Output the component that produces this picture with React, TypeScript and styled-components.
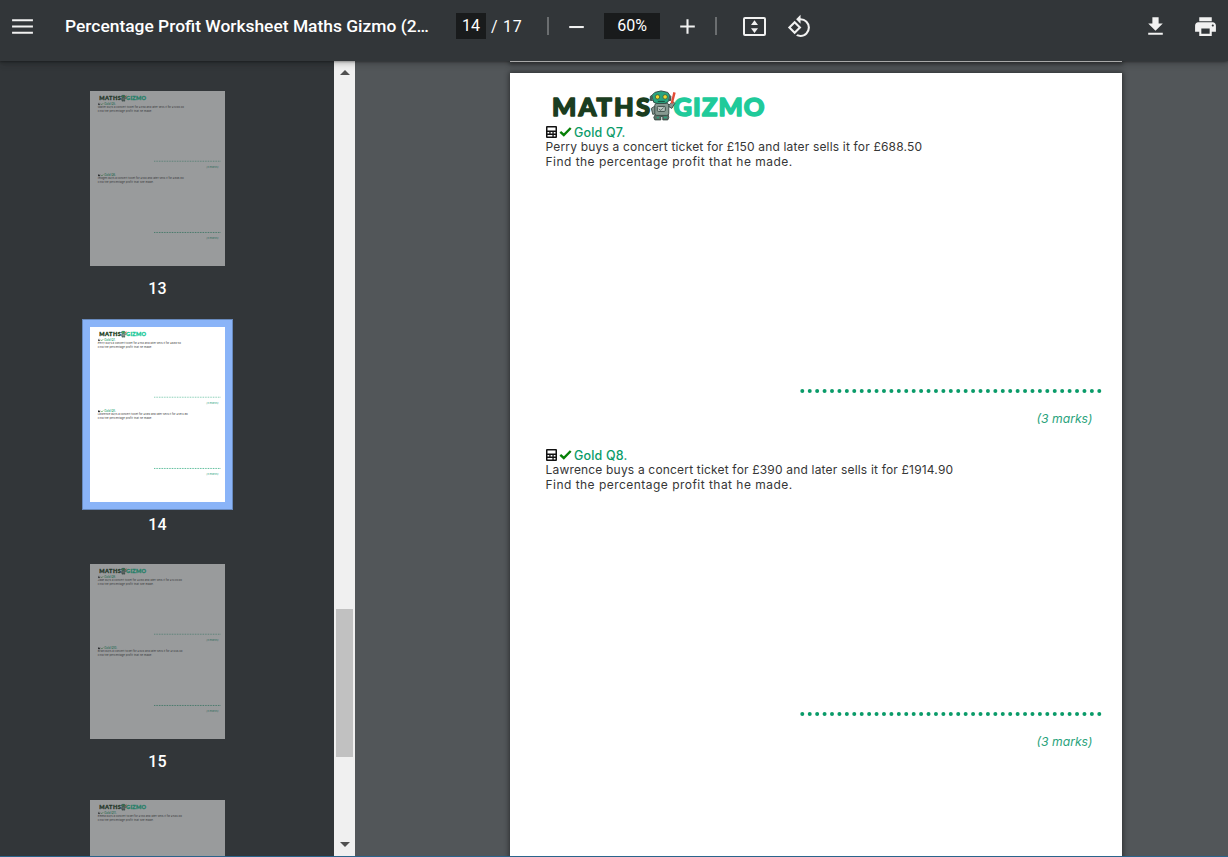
import React from "react";
import styled, { createGlobalStyle } from "styled-components";

const GlobalStyle = createGlobalStyle`
  * { box-sizing: border-box; }
  html, body { margin: 0; padding: 0; overflow: hidden; background: #525659; }
`;

const Shell = styled.div`
  width: 1228px;
  height: 857px;
  display: flex;
  flex-direction: column;
  overflow: hidden;
  font-family: Roboto, "Liberation Sans", sans-serif;
`;

const Toolbar = styled.header`
  height: 61px;
  flex: none;
  display: flex;
  align-items: center;
  padding: 0 10px 9px 10px;
  background: #323639;
  color: #fff;
  box-shadow: 0 -2px 8px rgba(0, 0, 0, 0.09), 0 4px 8px rgba(0, 0, 0, 0.06), 0 1px 2px rgba(0, 0, 0, 0.3), 0 2px 6px rgba(0, 0, 0, 0.15);
  z-index: 1;
`;

const Icon = styled.svg<{ $left?: number }>`
  width: 25px;
  height: 25px;
  margin-left: ${(p) => p.$left ?? 0}px;
  flex: none;
  fill: #f1f1f1;
`;

const Title = styled.h1`
  margin: 0 0 0 30px;
  width: 391px;
  font-size: 17.42px;
  font-weight: 500;
  line-height: 24px;
  white-space: nowrap;
`;

const Field = styled.div<{ $width: number; $left?: number }>`
  width: ${(p) => p.$width}px;
  height: 26px;
  margin-left: ${(p) => p.$left ?? 0}px;
  background: #191b1c;
  font-size: 16px;
  line-height: 25px;
  text-align: center;
`;

const PageTotal = styled.div`
  width: 56px;
  padding-left: 5px;
  font-size: 16px;
  line-height: 25px;
  letter-spacing: 0.7px;
  white-space: nowrap;
`;

const Divider = styled.div<{ $left: number }>`
  width: 2px;
  height: 18px;
  margin-left: ${(p) => p.$left}px;
  background: #6b6e70;
`;

const Spacer = styled.div`
  flex: 1;
`;

const Body = styled.main`
  flex: 1;
  min-height: 0;
  display: flex;
`;

const Sidebar = styled.aside`
  width: 334px;
  padding: 22px 19px 0 0;
  background: #323639;
  overflow: hidden;
  display: flex;
  flex-direction: column;
  align-items: center;
`;

const ThumbItem = styled.div`
  flex: none;
  height: 236.4px;
  display: flex;
  flex-direction: column;
  align-items: center;
`;

const ThumbFrame = styled.div<{ $active?: boolean }>`
  width: 151px;
  height: 191px;
  padding: 7px;
  background: ${(p) => (p.$active ? "#8ab4f8" : "transparent")};
  border: 1px solid ${(p) => (p.$active ? "#6789bd" : "transparent")};
`;

const ThumbPage = styled.div<{ $active?: boolean }>`
  width: 135px;
  height: 175px;
  overflow: hidden;
  background: #fff;
  opacity: ${(p) => (p.$active ? 1 : 0.5)};
`;

const ThumbScale = styled.div`
  width: 612px;
  transform: scale(0.2206);
  transform-origin: 0 0;
`;

const ThumbLabel = styled.div`
  margin-top: 3px;
  color: #fff;
  font-size: 16px;
  font-weight: 500;
  line-height: 24px;
  letter-spacing: 0.2px;
`;

const ScrollTrack = styled.div`
  width: 21px;
  flex: none;
  padding: 9px 0 9px;
  background: #f0f0f0;
  display: flex;
  flex-direction: column;
  align-items: center;
`;

const Arrow = styled.svg`
  width: 10px;
  height: 5px;
  fill: #505050;
  flex: none;
`;

const ScrollThumb = styled.div`
  width: 17px;
  height: 148px;
  margin: 534px 0 auto;
  background: #c1c1c1;
`;

const Viewer = styled.section`
  flex: 1;
  background: #525659;
  overflow: hidden;
  display: flex;
  flex-direction: column;
  align-items: flex-start;
  padding-left: 155px;
  gap: 11px;
`;

const PreviousPage = styled.div`
  width: 612px;
  height: 1px;
  flex: none;
  background: #fff;
  box-shadow: 0 1px 4px 1px rgba(0, 0, 0, 0.5);
`;

const CurrentPage = styled.div`
  flex: none;
  box-shadow: 0 0 5px 1px rgba(0, 0, 0, 0.45);
`;

const Sheet = styled.article`
  width: 612px;
  height: 793px;
  padding-top: 15px;
  background: #fff;
  color: #363636;
  font-family: Inter, "Noto Sans", sans-serif;
`;

const Logo = styled.svg`
  display: block;
  width: 220px;
  height: 37px;
  margin-left: 38px;
`;

const Block = styled.section`
  height: 323px;
  padding-left: 35.5px;
`;

const Heading = styled.h2`
  height: 14px;
  margin: 0;
  padding-top: 2px;
  display: flex;
  align-items: center;
  color: #0a9b69;
  font-size: 12.5px;
  font-weight: 500;
  letter-spacing: 0.15px;
  line-height: 14px;
  white-space: nowrap;
`;

const Glyph = styled.svg<{ $w: number }>`
  width: ${(p) => p.$w}px;
  height: 12px;
  margin: -3px 2.3px 0 0;
  flex: none;
`;

const Line = styled.p<{ $track: number }>`
  margin: 0;
  font-size: 12px;
  line-height: 15px;
  letter-spacing: ${(p) => p.$track}px;
  white-space: nowrap;
`;

const Dots = styled.svg`
  display: block;
  width: 304px;
  height: 6px;
  margin: 218.5px 0 0 253.5px;
`;

const Marks = styled.div`
  width: 547px;
  margin-top: 17.5px;
  color: #2aa37c;
  font-size: 12.2px;
  font-style: italic;
  line-height: 15px;
  text-align: right;
`;

const StatusLine = styled.footer`
  height: 1px;
  flex: none;
  background: #2a648c;
`;

type Problem = { label: string; first: string; second: string };

const Brand = () => (
  <Logo viewBox="0 0 220 37">
    <g fontFamily="Lato, sans-serif" fontWeight="900" fontSize="25.5" strokeWidth="1.5" strokeLinejoin="round">
      <text x="4" y="28" textLength="98" lengthAdjust="spacing" fill="#1a3d20" stroke="#1a3d20">MATHS</text>
      <text x="125.5" y="28" textLength="91" lengthAdjust="spacing" fill="#20ca9a" stroke="#20ca9a">GIZMO</text>
    </g>
    <g transform="translate(0.8 1.4)">
      <g stroke="#33453f" strokeWidth="0.9" strokeLinejoin="round">
        <path d="M107 16 102.500 19 104 25 107 24ZM118 16 123 19 126 14 124 12 121 15Z" fill="#87958f" />
        <path d="M107 24H119L120 28 119 30.500H114V27H112V30.500H106L105 28Z" fill="#5d7068" />
        <rect x="106" y="14" width="14" height="12" rx="2" fill="#879991" />
        <rect x="108.500" y="17" width="8" height="5" rx="1" fill="#b9c5c0" />
        <path d="M106 3Q112 0 119 3L121 6 120 11Q119 14 116 14H108Q104 14 104 10L103 6Z" fill="#2aa580" />
        <path d="M103 6 101.500 7V11L104 11M121 6 122 7V11L120 11" fill="#49635b" />
      </g>
      <circle cx="108.700" cy="7.500" r="2.200" fill="#f0d832" stroke="#35502d" strokeWidth=".7" />
      <circle cx="116.300" cy="7.500" r="2.200" fill="#f0d832" stroke="#35502d" strokeWidth=".7" />
      <path d="M109 12H116" stroke="#174d3c" strokeWidth="1" />
      <path d="M123 14 125.700 3" stroke="#e34b36" strokeWidth="2.400" />
      <path d="M110 19.500 112 21 115 18" fill="none" stroke="#556861" strokeWidth="1" />
      <path d="M108 28H110M115 28H118" stroke="#2aa580" strokeWidth="1.500" />
    </g>
  </Logo>
);

const Question = ({ label, first, second, promptOnly }: Problem & { promptOnly?: boolean }) => (
  <Block>
    <Heading>
      <Glyph $w={11} viewBox="0 0 11 12">
        <path fillRule="evenodd" fill="#111" d="M1 0H10Q11 0 11 1V11Q11 12 10 12H1Q0 12 0 11V1Q0 0 1 0ZM1.500 1.500V4.500H9.500V1.500ZM1.500 6V7.500H3.300V6ZM4.600 6V7.500H6.400V6ZM7.700 6V7.500H9.500V6ZM1.500 9V10.500H6.400V9ZM7.700 9V10.500H9.500V9Z" />
      </Glyph>
      <Glyph $w={13} viewBox="0 0 13 12">
        <path d="M1.300 5.800 4.800 9 11.700 2" fill="none" stroke="#078007" strokeWidth="2.400" />
      </Glyph>
      <span>{label}</span>
    </Heading>
    <Line $track={0.18}>{first}</Line>
    <Line $track={0.47}>{second}</Line>
    {!promptOnly && (
      <>
        <Dots viewBox="0 0 304 6">
          <path d="M3.300 3H302" fill="none" stroke="#0a9b69" strokeWidth="4" strokeLinecap="round" strokeDasharray="0 7.425" />
        </Dots>
        <Marks>(3 marks)</Marks>
      </>
    )}
  </Block>
);

const Worksheet = ({ problems, promptOnly }: { problems: Problem[]; promptOnly?: boolean }) => (
  <Sheet>
    <Brand />
    {problems.map((p) => (
      <Question key={p.label} {...p} promptOnly={promptOnly} />
    ))}
  </Sheet>
);

const he = "Find the percentage profit that he made.";
const she = "Find the percentage profit that she made.";

type Page = { number: number; problems: Problem[]; partial?: boolean };

const pages: Page[] = [
  {
    number: 13,
    problems: [
      { label: "Gold Q5.", first: "Walter buys a concert ticket for £350 and later sells it for £1200.40", second: he },
      { label: "Gold Q6.", first: "Imogen buys a concert ticket for £160 and later sells it for £808.80", second: she },
    ],
  },
  {
    number: 14,
    problems: [
      { label: "Gold Q7.", first: "Perry buys a concert ticket for £150 and later sells it for £688.50", second: he },
      { label: "Gold Q8.", first: "Lawrence buys a concert ticket for £390 and later sells it for £1914.90", second: he },
    ],
  },
  {
    number: 15,
    problems: [
      { label: "Gold Q9.", first: "Jade buys a concert ticket for £280 and later sells it for £1220.00", second: she },
      { label: "Gold Q10.", first: "Brian buys a concert ticket for £320 and later sells it for £1446.40", second: he },
    ],
  },
  {
    number: 16,
    partial: true,
    problems: [
      { label: "Gold Q11.", first: "Emma buys a concert ticket for £130 and later sells it for £504.00", second: she },
    ],
  },
];

export default function App() {
  return (
    <>
      <GlobalStyle />
      <Shell>
        <Toolbar>
          <Icon viewBox="0 0 24 24"><path d="M2 5H22V7H2ZM2 11H22V13H2ZM2 17H22V19H2Z" /></Icon>
          <Title>Percentage Profit Worksheet Maths Gizmo (2…</Title>
          <Field $width={30}>14</Field>
          <PageTotal>/ 17</PageTotal>
          <Divider $left={5} />
          <Icon $left={15} viewBox="0 0 24 24"><path d="M5 11.500H19V13.500H5Z" /></Icon>
          <Field $width={56} $left={15}>60%</Field>
          <Icon $left={15} viewBox="0 0 24 24"><path d="M19 13H13V19H11V13H5V11H11V5H13V11H19Z" /></Icon>
          <Divider $left={15} />
          <Icon $left={25} viewBox="0 0 25 25">
            <rect x="2" y="4" width="21" height="17" rx="1" fill="none" stroke="#f1f1f1" strokeWidth="2" />
            <path d="M12.500 6.300 16 11H9ZM12.500 19 16 14.300H9Z" />
          </Icon>
          <Icon $left={20} viewBox="0 0 24 24">
            <path d="M7.340 6.410.860 12.900l6.490 6.480 6.490-6.480-6.500-6.490zM3.690 12.900l3.660-3.660L11 12.900l-3.660 3.660-3.650-3.660zm15.670-6.260A8.950 8.950 0 0 0 13 4V.76L8.760 5 13 9.240V6c1.790 0 3.580.68 4.950 2.050a7.007 7.007 0 0 1 0 9.900 6.973 6.973 0 0 1-7.790 1.440l-1.490 1.490C10.020 21.620 11.510 22 13 22c2.300 0 4.610-.88 6.360-2.640a8.980 8.980 0 0 0 0-12.720z" />
          </Icon>
          <Spacer />
          <Icon viewBox="0 0 24 24"><path d="M19 9h-4V3H9v6H5l7 7 7-7zM5 18v2h14v-2H5z" /></Icon>
          <Icon $left={25} viewBox="0 0 24 24"><path d="M19 8H5c-1.660 0-3 1.340-3 3v6h4v4h12v-4h4v-6c0-1.660-1.340-3-3-3zm-3 11H8v-5h8v5zm3-7c-.55 0-1-.45-1-1s.45-1 1-1 1 .45 1 1-.45 1-1 1zm-1-9H6v4h12V3z" /></Icon>
        </Toolbar>
        <Body>
          <Sidebar>
            {pages.map((page) => (
              <ThumbItem key={page.number}>
                <ThumbFrame $active={page.number === 14}>
                  <ThumbPage $active={page.number === 14}>
                    <ThumbScale><Worksheet problems={page.problems} promptOnly={page.partial} /></ThumbScale>
                  </ThumbPage>
                </ThumbFrame>
                {!page.partial && <ThumbLabel>{page.number}</ThumbLabel>}
              </ThumbItem>
            ))}
          </Sidebar>
          <ScrollTrack>
            <Arrow viewBox="0 0 10 5"><path d="M5 0 10 5H0Z" /></Arrow>
            <ScrollThumb />
            <Arrow viewBox="0 0 10 5"><path d="M0 0H10L5 5Z" /></Arrow>
          </ScrollTrack>
          <Viewer>
            <PreviousPage />
            <CurrentPage><Worksheet problems={pages[1].problems} /></CurrentPage>
          </Viewer>
        </Body>
        <StatusLine />
      </Shell>
    </>
  );
}
